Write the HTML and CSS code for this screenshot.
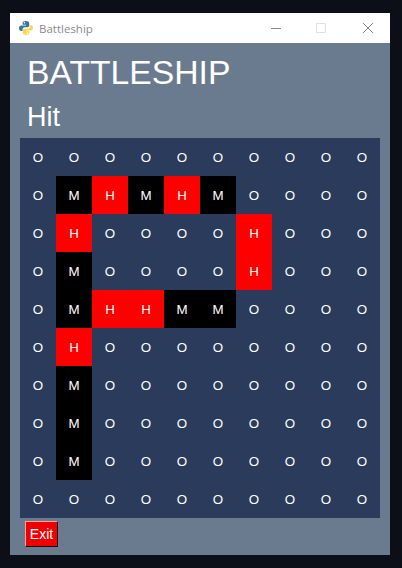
FILE: index.html
```html
<!DOCTYPE html>
<html lang="en">
<head>
  <meta charset="UTF-8" />
  <title>Battleship</title>
  <link rel="stylesheet" href="styles.css">
</head>
<body>

<div class="window">
  <div class="titlebar">
    <svg class="app-icon" width="16" height="16" viewBox="0 0 16 16">
      <path fill="#3c74a6" d="M7.8 1C5.6 1 4.6 1.9 4.6 3.2V4.8H8V5.4H3.2C1.8 5.4 1 6.6 1 8.2S1.8 11 3.2 11H4.6V9.4C4.6 8 5.6 7.2 7 7.2H9.6C10.6 7.2 11.2 6.5 11.2 5.6V3.2C11.2 1.8 9.9 1 7.8 1Z"/>
      <path fill="#fbd74f" d="M8.2 15C10.4 15 11.4 14.1 11.4 12.8V11.2H8V10.6H12.8C14.2 10.6 15 9.4 15 7.8S14.2 5 12.8 5H11.9V6.6C11.9 8 10.9 8.8 9.5 8.8H6.4C5.4 8.8 4.8 9.5 4.8 10.4V12.8C4.8 14.2 6.1 15 8.2 15Z"/>
      <circle cx="6.4" cy="2.8" r=".7" fill="#fff"/>
      <circle cx="9.6" cy="13.2" r=".7" fill="#fff"/>
    </svg>
    <span class="app-name">Battleship</span>
    <div class="controls">
      <svg width="46" height="30" viewBox="0 0 46 30"><path stroke="#8a8a8a" d="M18 15.5H28"/></svg>
      <svg width="46" height="30" viewBox="0 0 46 30"><path fill="none" stroke="#e2e2e2" d="M17.5 10.5H26.5V19.5H17.5Z"/></svg>
      <svg width="46" height="30" viewBox="0 0 46 30"><path stroke="#808080" d="M18 10L28 20M28 10L18 20"/></svg>
    </div>
  </div>

  <div class="content">
    <h1 class="title">BATTLESHIP</h1>
    <p class="status">Hit</p>
    <div class="board" id="board"></div>
    <button class="exit" type="button">Exit</button>
  </div>
</div>

<script>
  // O = open water, M = miss, H = hit
  const rows = [
    'OOOOOOOOOO',
    'OMHMHMOOOO',
    'OHOOOOHOOO',
    'OMOOOOHOOO',
    'OMHHMMOOOO',
    'OHOOOOOOOO',
    'OMOOOOOOOO',
    'OMOOOOOOOO',
    'OMOOOOOOOO',
    'OOOOOOOOOO'
  ];

  const board = document.getElementById('board');
  rows.forEach((row) => {
    row.split('').forEach((mark) => {
      const cell = document.createElement('div');
      cell.className = 'cell cell-' + mark.toLowerCase();
      cell.textContent = mark;
      board.appendChild(cell);
    });
  });
</script>

</body>
</html>
```

FILE: styles.css
```css
* {
  box-sizing: border-box;
}
html, body {
  height: 100%;
}
body {
  margin: 0;
  padding: 13px 12px 13px 10px;
  background: #0c0f17;
  font-family: "Liberation Sans", Arial, sans-serif;
  overflow: hidden;
}
.window {
  height: 542px;
  display: flex;
  flex-direction: column;
  background: #6b7b8f;
}
.titlebar {
  height: 30px;
  flex: none;
  display: flex;
  align-items: center;
  padding-left: 8px;
  background: white;
}
.app-icon {
  flex: none;
}
.app-name {
  margin-left: 5px;
  font-family: "Open Sans", sans-serif;
  font-size: 11.5px;
  color: #8c8c8c;
}
.controls {
  margin-left: auto;
  display: flex;
  margin-right: -1px;
}
.controls svg {
  display: block;
}
.content {
  flex: 1;
  padding: 0 10px;
}
.title {
  margin: 0;
  padding: 9px 0 0 7px;
  height: 50px;
  font-size: 33.7px;
  line-height: 40px;
  font-weight: 400;
  color: white;
}
.status {
  margin: 0;
  padding-left: 7px;
  height: 45px;
  font-size: 27px;
  line-height: 49px;
  color: white;
}
.board {
  display: grid;
  grid-template-columns: repeat(10, 36px);
  grid-auto-rows: 38px;
  background: #2a3b5c;
}
.cell {
  display: flex;
  align-items: center;
  justify-content: center;
  font-size: 13.33px;
  color: white;
}
.cell-m {
  background: black;
}
.cell-h {
  background: red;
}
.exit {
  display: block;
  width: 33px;
  height: 26px;
  margin: 3px 0 0 5px;
  padding: 0;
  border: 1px solid;
  border-color: #f2a0a0 #101010 #101010 #f2a0a0;
  background: #f00000;
  font-family: inherit;
  font-size: 14px;
  color: white;
}
```
